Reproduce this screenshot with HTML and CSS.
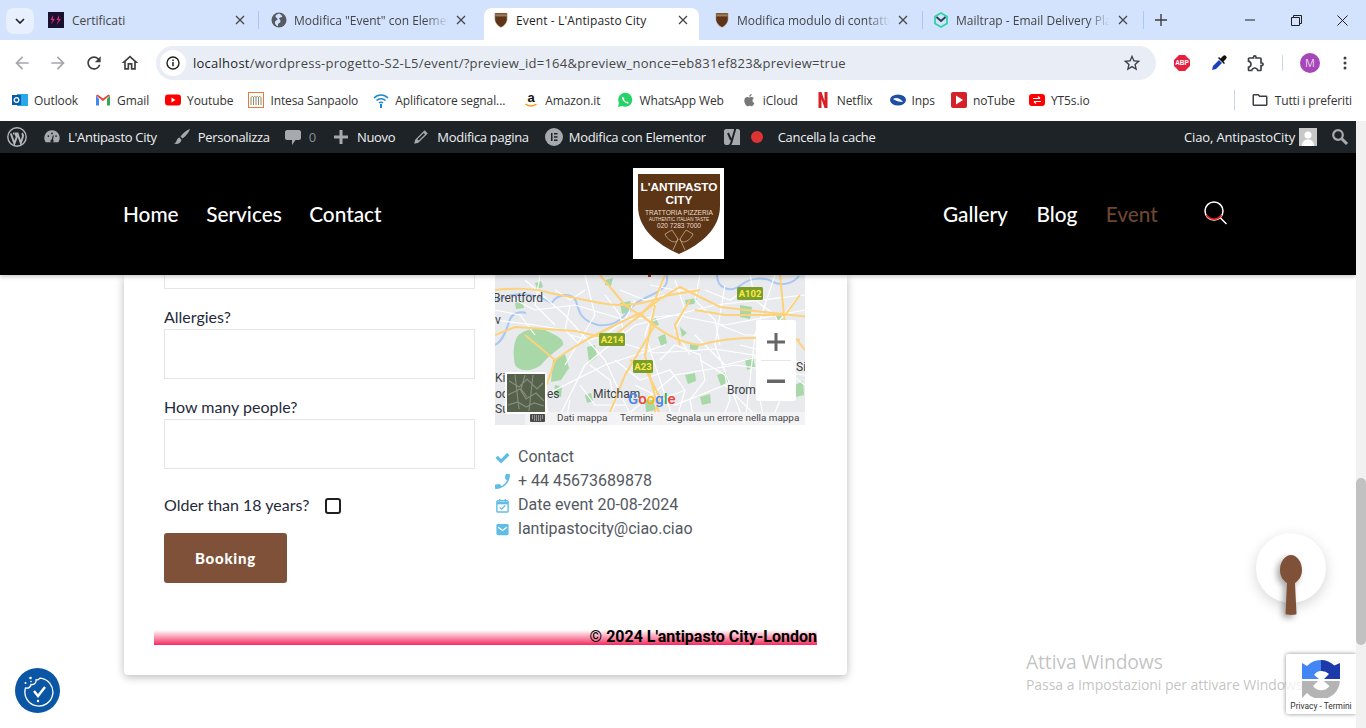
FILE: index.html
```html
<!DOCTYPE html>
<html lang="it">
<head>
<meta charset="utf-8">
<title>Event - L'Antipasto City</title>
<link rel="stylesheet" href="styles.css">
</head>
<body>
<svg class="defs" width="0" height="0" aria-hidden="true">
  <symbol id="shield" viewBox="0 0 16 18">
    <path d="M1 1h14v7c0 4-3 7.500-7 9.500C4 15.500 1 12 1 8z" fill="#5e3518" stroke="#e8e0d0" stroke-width=".6"/>
    <path d="M1.500 2.500h13v2.500h-13z" fill="#9c7d5e"/>
  </symbol>
  <symbol id="close" viewBox="0 0 10 10">
    <path d="M1 1l8 8M9 1l-8 8" stroke="#474747" stroke-width="1.300" fill="none"/>
  </symbol>
</svg>

<div class="progress"></div>

<header class="tabstrip">
  <div class="tabmenu"><svg width="10" height="6" viewBox="0 0 10 6"><path d="M1 1l4 4 4-4" stroke="#1f1f1f" stroke-width="1.600" fill="none"/></svg></div>
  <div class="tab tab-1">
    <svg class="fav" viewBox="0 0 16 16"><rect width="16" height="16" fill="#1a1030"/><path d="M5 3L2.500 8h2L3 12.500 7 7H5zM11 3L8.500 8h2L8.500 13 13 7h-2z" fill="#d6286f"/></svg>
    <span class="tab-title">Certificati</span>
    <svg class="tab-x"><use href="#close"/></svg>
  </div>
  <div class="tab tab-2">
    <svg class="fav" viewBox="0 0 16 16"><circle cx="8" cy="8" r="7.500" fill="#555a60"/><path d="M8 1.500c-1 1-3 1-3.500 2.500s1.500 1.500 2 3-2 1-2.500 3 2 4 2.500 4.500l1-3c1-.5 2-1 2-2.500S8 7.500 8 6.500s2-1 3-1.500S9.500 2 8 1.500z" fill="#d3e3fd"/></svg>
    <span class="tab-title fade">Modifica "Event" con Elementor</span>
    <svg class="tab-x"><use href="#close"/></svg>
  </div>
  <div class="tab tab-active">
    <svg class="fav" viewBox="0 0 16 18"><use href="#shield"/></svg>
    <span class="tab-title">Event - L'Antipasto City</span>
    <svg class="tab-x"><use href="#close"/></svg>
  </div>
  <div class="tab tab-4">
    <svg class="fav" viewBox="0 0 16 18"><use href="#shield"/></svg>
    <span class="tab-title fade">Modifica modulo di contatto</span>
    <svg class="tab-x"><use href="#close"/></svg>
  </div>
  <div class="tab tab-5">
    <svg class="fav" viewBox="0 0 16 16"><path d="M8 1l6 3.500v7L8 15l-6-3.500v-7z" fill="none" stroke="#2fd3a5" stroke-width="1.800"/><path d="M3.500 5L8 9l4.500-4" fill="none" stroke="#2d3a4a" stroke-width="1.800"/></svg>
    <span class="tab-title fade">Mailtrap - Email Delivery Platform</span>
    <svg class="tab-x"><use href="#close"/></svg>
  </div>
  <svg class="newtab" width="12" height="12" viewBox="0 0 12 12"><path d="M6 0v12M0 6h12" stroke="#3c3c3c" stroke-width="1.400"/></svg>
  <div class="winctl">
    <svg width="10" height="10" viewBox="0 0 10 10"><path d="M0 5h10" stroke="#1f1f1f" stroke-width="1"/></svg>
    <svg width="11" height="11" viewBox="0 0 11 11"><path d="M.5 2.500h8v8h-8zM2.500 2.500v-2h8v8h-2" fill="none" stroke="#1f1f1f"/></svg>
    <svg width="11" height="11" viewBox="0 0 11 11"><path d="M.5.500l10 10M10.500.500l-10 10" stroke="#1f1f1f"/></svg>
  </div>
</header>

<nav class="toolbar">
  <svg class="tb-ic" viewBox="0 0 24 24"><path fill="#a4a7ab" d="M20 11H7.830l5.590-5.590L12 4l-8 8 8 8 1.410-1.410L7.830 13H20z"/></svg>
  <svg class="tb-ic" viewBox="0 0 24 24"><path fill="#a4a7ab" d="M4 11h12.170l-5.590-5.590L12 4l8 8-8 8-1.410-1.410L16.170 13H4z"/></svg>
  <svg class="tb-ic" viewBox="0 0 24 24"><path fill="#3c3f43" d="M17.650 6.350A7.958 7.958 0 0 0 12 4c-4.420 0-7.990 3.580-7.990 8s3.570 8 7.990 8c3.730 0 6.840-2.550 7.730-6h-2.080A5.990 5.990 0 0 1 12 18c-3.310 0-6-2.690-6-6s2.690-6 6-6c1.660 0 3.140.690 4.220 1.780L13 11h7V4l-2.350 2.350z"/></svg>
  <svg class="tb-ic" viewBox="0 0 24 24"><path fill="#3c3f43" d="M12 5.690l5 4.500V18h-2v-6H9v6H7v-7.810l5-4.500M12 3L2 12h3v8h6v-6h2v6h6v-8h3L12 3z"/></svg>
  <div class="omnibox">
    <span class="site-info"><svg width="14" height="14" viewBox="0 0 14 14"><circle cx="7" cy="7" r="6" fill="none" stroke="#1f1f1f" stroke-width="1.400"/><path d="M7 6v4.200M7 3.600v1.300" stroke="#1f1f1f" stroke-width="1.500"/></svg></span>
    <span class="url"><span class="url-host">localhost</span>/wordpress-progetto-S2-L5/event/?preview_id=164&amp;preview_nonce=eb831ef823&amp;preview=true</span>
    <svg class="star" width="20" height="20" viewBox="0 0 24 24"><path fill="#3c3f43" d="M22 9.240l-7.190-.620L12 2 9.190 8.630 2 9.240l5.460 4.730L5.820 21 12 17.270 18.180 21l-1.630-7.030L22 9.240zM12 15.400l-3.760 2.270 1-4.280-3.320-2.880 4.380-.380L12 6.100l1.710 4.040 4.380.380-3.320 2.880 1 4.280L12 15.400z"/></svg>
  </div>
  <svg class="abp" width="16" height="16" viewBox="0 0 16 16"><path d="M5 0h6l5 5v6l-5 5H5l-5-5V5z" fill="#e8203f"/><text x="8" y="10.300" class="abp-t">ABP</text></svg>
  <svg class="picker" width="18" height="18" viewBox="0 0 18 18"><path d="M2 16l1-4 6-6 3 3-6 6z" fill="#1a3fbf"/><path d="M8 4l6 6 1-1-1.500-1.500L16 5a2 2 0 0 0-3-3l-2.500 2.500L9 3z" fill="#111"/></svg>
  <svg class="puzzle" width="20" height="20" viewBox="0 0 24 24"><path fill="#3c3f43" d="M10.500 4.500c.280 0 .5.220.5.500v2h6v6h2c.280 0 .5.220.5.500s-.220.500-.5.500h-2v6h-2.120c-.680-1.750-2.390-3-4.380-3s-3.700 1.250-4.380 3H4v-2.120c1.750-.680 3-2.390 3-4.380 0-1.990-1.240-3.700-2.990-4.380L4 7h6V5c0-.280.220-.5.500-.5m0-2A2.500 2.500 0 0 0 8 5H4c-1.100 0-1.990.9-1.990 2v3.800h.29c1.490 0 2.700 1.210 2.700 2.700s-1.210 2.700-2.700 2.700H2V20c0 1.100.9 2 2 2h3.800v-.3c0-1.490 1.210-2.700 2.700-2.700s2.700 1.210 2.700 2.700v.3H17c1.100 0 2-.9 2-2v-4c1.380 0 2.500-1.120 2.500-2.500S20.380 11 19 11V7c0-1.100-.9-2-2-2h-4a2.500 2.500 0 0 0-2.500-2.500z"/></svg>
  <span class="tb-sep"></span>
  <span class="avatar">M</span>
  <svg class="kebab" width="4" height="14" viewBox="0 0 4 14"><circle cx="2" cy="2" r="1.500" fill="#3c3f43"/><circle cx="2" cy="7" r="1.500" fill="#3c3f43"/><circle cx="2" cy="12" r="1.500" fill="#3c3f43"/></svg>
</nav>

<nav class="bookmarks">
  <span class="bm bm-outlook"><svg viewBox="0 0 16 16"><rect x="5" y="2" width="11" height="12" fill="#28a8ea"/><rect y="3" width="9" height="10" fill="#0a5cab"/><circle cx="4.500" cy="8" r="2.300" fill="none" stroke="#fff" stroke-width="1.300"/></svg>Outlook</span>
  <span class="bm bm-gmail"><svg viewBox="0 0 16 16"><path d="M1 3.500v10h3V7z" fill="#4285f4"/><path d="M15 3.500v10h-3V7z" fill="#34a853"/><path d="M1 3.500L8 9l7-5.500-1.500-1L8 6.500 2.500 2.500z" fill="#ea4335"/></svg>Gmail</span>
  <span class="bm bm-yt"><svg viewBox="0 0 16 16"><rect y="2.500" width="16" height="11" rx="3" fill="#f00"/><path d="M6.500 5.500v5l4-2.500z" fill="#fff"/></svg>Youtube</span>
  <span class="bm bm-intesa"><svg viewBox="0 0 16 16"><rect x=".5" y=".5" width="15" height="15" fill="#fff" stroke="#e07b39"/><path d="M3 13V6c0-2 2.500-2 2.500 0v7M5.500 6c0-2 2.500-2 2.500 0v7M8 6c0-2 2.500-2 2.500 0v7M10.500 6c0-2 2.500-2 2.500 0v7" fill="none" stroke="#8a8a6a"/></svg>Intesa Sanpaolo</span>
  <span class="bm bm-apl"><svg viewBox="0 0 16 16"><path d="M1 6c4-4 10-4 14 0M3.500 8.500c2.500-2.500 6.500-2.500 9 0M6 11c1-1 3-1 4 0" fill="none" stroke="#1e88d0" stroke-width="1.500"/><path d="M7 12h2v4H7z" fill="#1e88d0"/></svg>Aplificatore segnal...</span>
  <span class="bm bm-amz"><svg viewBox="0 0 16 16"><text x="8" y="10" class="amz-t">a</text><path d="M2.500 12c3 2.500 8 2.500 11 0" fill="none" stroke="#f90" stroke-width="1.500"/></svg>Amazon.it</span>
  <span class="bm bm-wa"><svg viewBox="0 0 16 16"><path d="M1 15l1-4a7 7 0 1 1 3 3z" fill="#25d366"/><path d="M5.500 4.500c-1 1-.5 3 1.500 5s4 2.500 5 1.500l-1.500-1.500-1 .5c-1-.5-2-1.500-2.500-2.500l.5-1z" fill="#fff"/></svg>WhatsApp Web</span>
  <span class="bm bm-icl"><svg viewBox="0 0 16 16"><path d="M11.500 8.500c0-1.500 1.200-2.200 1.300-2.300-.7-1-1.800-1.200-2.200-1.200-.9-.1-1.800.6-2.300.6s-1.200-.6-2-.6c-1 0-2 .6-2.500 1.500-1.100 1.900-.3 4.700.8 6.200.5.800 1.100 1.600 2 1.600.8 0 1.100-.5 2-.5s1.200.5 2 .5 1.400-.8 1.900-1.500c.6-.9.800-1.700.8-1.800 0 0-1.800-.7-1.800-2.500zM10 4c.4-.5.700-1.200.6-2-.6 0-1.400.4-1.800.9-.4.5-.7 1.200-.6 1.900.7 0 1.400-.4 1.800-.8z" fill="#777"/></svg>iCloud</span>
  <span class="bm bm-nf"><svg viewBox="0 0 16 16"><path d="M3.500 0h3l3 9V0h3v16h-3l-3-9v9h-3z" fill="#d81f26"/></svg>Netflix</span>
  <span class="bm bm-inps"><svg viewBox="0 0 16 16"><ellipse cx="8" cy="8" rx="8" ry="5.500" fill="#1d4fa3"/><path d="M3 7c3-2 7-1 10 3-4 0-7-1-10-3z" fill="#fff"/></svg>Inps</span>
  <span class="bm bm-nt"><svg viewBox="0 0 16 16"><rect width="16" height="16" rx="2" fill="#d2232a"/><path d="M5 3.500v9l7-4.500z" fill="#fff"/></svg>noTube</span>
  <span class="bm bm-yt5"><svg viewBox="0 0 16 16"><rect y="2" width="16" height="12" rx="3" fill="#f00"/><path d="M4 6.500h7M9 4.500l2 2M12 9.500H5M7 11.500l-2-2" stroke="#fff" stroke-width="1.200" fill="none"/></svg>YT5s.io</span>
  <span class="bm-sep"></span>
  <span class="bm bm-all"><svg viewBox="0 0 24 24"><path fill="#3c3f43" d="M20 6h-8l-2-2H4c-1.100 0-2 .9-2 2v12c0 1.100.9 2 2 2h16c1.100 0 2-.9 2-2V8c0-1.100-.9-2-2-2zm0 12H4V6h5.170l2 2H20v10z"/></svg>Tutti i preferiti</span>
</nav>

<div class="viewport">
  <div class="site">
    <div class="adminbar">
      <span class="ab ab-wp"><svg width="20" height="20" viewBox="0 0 20 20"><circle cx="10" cy="10" r="9.200" fill="none" stroke="#b4b7ba" stroke-width="1.400"/><path d="M3.800 6.500l3.600 10 2.300-6.500-1.300-3.500M7.500 6.500h-1.500M8 6.500h3.500M10.500 6.500l3.300 9.500 2-6c.5-1.600 0-2.800-.8-3.800" fill="none" stroke="#b4b7ba" stroke-width="2"/></svg></span>
      <span class="ab ab-site"><svg width="18" height="18" viewBox="0 0 20 20"><path d="M10 2.500a8.500 8.500 0 0 0-7 13.300h14A8.500 8.500 0 0 0 10 2.500z" fill="#a7aaad"/><path d="M9 15l2-7 1 .3-1.200 6.700" fill="#1d2327"/><circle cx="10" cy="14.500" r="1.800" fill="#1d2327"/><circle cx="6" cy="9" r="1" fill="#1d2327"/><circle cx="10" cy="6" r="1" fill="#1d2327"/><circle cx="14.500" cy="9" r="1" fill="#1d2327"/></svg>L'Antipasto City</span>
      <span class="ab ab-cust"><svg width="20" height="20" viewBox="0 0 20 20"><path d="M18 2c-3 1-7 4-9.500 7.500l2 2C14 9 17 5 18 2zM7.500 10.500c-2 .5-2.500 2-3 3.500-.3 1-1.200 2-2.500 2.500 3 1 6.500.2 7.500-3.500z" fill="#a7aaad"/></svg>Personalizza</span>
      <span class="ab ab-com"><svg width="20" height="20" viewBox="0 0 20 20"><path d="M4 3h12c1 0 2 1 2 2v6c0 1-1 2-2 2h-3.500L9 18v-5H4c-1 0-2-1-2-2V5c0-1 1-2 2-2z" fill="#a7aaad"/></svg><span class="ab-dim">0</span></span>
      <span class="ab ab-new"><svg width="16" height="16" viewBox="0 0 16 16"><path d="M6.500 1h3v5.500H15v3H9.500V15h-3V9.500H1v-3h5.500z" fill="#a7aaad"/></svg>Nuovo</span>
      <span class="ab ab-edit"><svg width="18" height="18" viewBox="0 0 20 20"><path d="M14 2.500l3.500 3.500L7 16.500l-4.500 1 1-4.500zM13 5.500L6 12.500l1.500 1.500 7-7z" fill="#a7aaad" fill-rule="evenodd"/></svg>Modifica pagina</span>
      <span class="ab ab-el"><svg width="18" height="18" viewBox="0 0 18 18"><circle cx="9" cy="9" r="9" fill="#a7aaad"/><path d="M6 5h1.500v8H6zM9 5h3.500v1.500H9zM9 8.250h3.500v1.500H9zM9 11.500h3.500V13H9z" fill="#1d2327"/></svg>Modifica con Elementor</span>
      <span class="ab ab-yoast"><svg width="18" height="20" viewBox="0 0 18 20"><path d="M3 2h12c1 0 2 1 2 2v14H3c-1 0-2-1-2-2V4c0-1 1-2 2-2z" fill="#a7aaad"/><path d="M12.500 1l-4 14c-.5 2-1.500 3.500-3 4M5 6l3 7" fill="none" stroke="#1d2327" stroke-width="2"/></svg></span>
      <span class="ab-dot"></span>
      <span class="ab ab-cache">Cancella la cache</span>
      <span class="ab ab-hello">Ciao, AntipastoCity<svg class="ab-avatar" width="18" height="18" viewBox="0 0 18 18"><rect width="18" height="18" fill="#c8c8c8"/><circle cx="9" cy="7" r="3.500" fill="#fff"/><path d="M3 18c0-5 3-6.500 6-6.500s6 1.500 6 6.500z" fill="#fff"/></svg></span>
      <svg class="ab-search" width="18" height="18" viewBox="0 0 18 18"><circle cx="7" cy="7" r="4.800" fill="none" stroke="#a7aaad" stroke-width="2.200"/><path d="M10.500 10.500l5.500 5.500" stroke="#a7aaad" stroke-width="3"/></svg>
    </div>

    <div class="masthead">
      <ul class="menu menu-l">
        <li>Home</li><li>Services</li><li>Contact</li>
      </ul>
      <div class="logo">
        <svg width="82" height="80" viewBox="0 0 82 80">
          <path d="M0 0h82v32c0 22-18 38-41 48C18 70 0 54 0 32z" fill="#5c3416"/>
          <text x="41" y="17" class="lg-a">L'ANTIPASTO</text>
          <text x="41" y="30" class="lg-a">CITY</text>
          <text x="41" y="41" class="lg-b">TRATTORIA PIZZERIA</text>
          <text x="41" y="47" class="lg-c">AUTHENTIC ITALIAN TASTE</text>
          <text x="41" y="54" class="lg-b">020 7283 7000</text>
          <path d="M27 60l7-4 6 9c-1 4-5 3-7 2-3-2-5-4-6-7zM55 60l-7-4-6 9c1 4 5 3 7 2 3-2 5-4 6-7zM40 65l-5 11M42 65l5 11" fill="none" stroke="#c9ad8c" stroke-width=".8"/>
        </svg>
      </div>
      <div class="menu-r">
        <ul class="menu menu-right">
          <li>Gallery</li><li>Blog</li><li class="current">Event</li>
        </ul>
        <svg class="m-search" width="25" height="25" viewBox="0 0 25 25"><circle cx="11" cy="11" r="9" fill="none" stroke="#fff" stroke-width="1.500"/><path d="M3.500 15a9 9 0 0 0 15 0" fill="none" stroke="#e2231a" stroke-width="1.800"/><path d="M17.500 18l6 6" stroke="#fff" stroke-width="1.500"/></svg>
      </div>
    </div>

    <main class="content">
      <article class="card">
        <div class="columns">
          <form class="form">
            <div class="input input-cut"></div>
            <label class="label label-1">Allergies?</label>
            <div class="input"></div>
            <label class="label label-2">How many people?</label>
            <div class="input"></div>
            <div class="adult">Older than 18 years?<span class="check"></span></div>
            <div class="booking">Booking</div>
          </form>
          <div class="side">
            <svg class="map" width="310" height="150" viewBox="0 0 310 150">
              <rect width="310" height="150" fill="#e8eaed"/>
              <g fill="#a8d8a8">
                <path d="M22 62c6-8 20-10 30-6 8 4 18 8 16 14-6 6-14 10-22 20-8 6-20 8-26 0-2-10-2-20 2-28z"/>
                <path d="M58 85l12-6 4 14-8 12-10 2z"/>
                <path d="M125 28l10-2 2 10-10 3zM92 72l8-2 2 12-8 6zM163 62l7-3 2 9-6 3zM185 52l7 6-5 4zM195 68l9 2-2 6-7-2zM222 100l9-3 3 9-8 5zM190 100l10-2 1 8-8 3zM245 30l12 2-2 12-10-2zM280 40l6-2 2 8-6 2zM300 110l8-4 1 14-8 2zM90 120l6-2 2 8-6 2zM150 125l8 0 3 10-10 2zM40 8l6-2 2 6-6 2zM190 25l12-2-3 6-8 1zM20 28l8-2 1 7-8 1zM155 45l6-2 3 7-7 1zM250 85l8-3 2 10-8 3zM110 5l8-2-2 8-6-1zM60 110l7 2-1 10-7-2zM205 122l10-3 1 9-9 2z"/>
              </g>
              <g fill="none" stroke="#a9c8f4" stroke-width="2">
                <path d="M2 25c20-10 40-5 55 3 4-8 18-12 24-2 3 12 6 20 22 24 18 2 26-8 34-18 8-10 22-10 32-20 4-4 3-8 3-14"/>
                <path d="M222 0c0 14 14 18 24 10 10-8 24-8 32-3 8 4 20 2 26-6"/>
                <path d="M0 70c8-4 12-16 15-26 3-6 10-8 16-6"/>
              </g>
              <g fill="none" stroke="#fff" stroke-width="1.200">
                <path d="M0 45l40 5 60 10 60 18 60-4 90 14M30 5l40 35 40 45 30 65M170 0l-20 60 30 90M230 10l-10 60 30 80M60 150l30-60 50-40 80-20 90-10M120 150l60-50 60-10 70 10M0 100l50 20 60-30 60-20M280 0l-20 60-10 90M90 0l10 40-30 50M200 60l30 30 40-10 40 30M140 110l40 20 50-20 30 30M10 20l30 15 40-5 50 15 50-5 50 10 80-15"/>
                <path d="M0 35l25 5 15 20M45 0l-5 30 20 20M75 30l-5 25 15 15M110 20l15 20 5 25M140 25l-10 20-20 15M180 5l10 30-10 20 15 25M205 0l-5 25 20 20 5 25M255 0l5 25 20 15 10 25M300 25l-15 20 5 30M95 90l20 15 5 25-10 20M120 85l25 20 30-10 15 20-10 35M165 85l15-15 25 10 5 25-15 20 5 25M205 85l25 15 5 25-10 25M245 70l20 5M190 115l-25 10M75 60l20 5 15-5M85 110l15 20 30 0M35 110l15 10 5 30M75 125l-5 25M265 125l5 25M285 125l-10 25M300 75l-25 50M225 50l25 10 30 0M125 15l25 10 20-5M155 10l25 5 25 0M210 15l25 10 15-10M60 15l15 10 15-10"/>
              </g>
              <g fill="none" stroke="#fdd27a" stroke-width="2">
                <path d="M0 60l20-8 60 4 35 8 50-40 20-12 40 20 90 10"/>
                <path d="M0 15c15-2 40-2 55 3l50 10c30 6 50-2 70-8l30-5"/>
                <path d="M105 0l25 30 30 20-30 50-20 50"/>
                <path d="M60 85c20-15 40-25 60-35l25-12c20 20 40 30 60 32 20-6 50-10 100-5"/>
                <path d="M160 30l-10 50 12 50 5 20"/>
                <path d="M135 85l15 8 15 30-10 27"/>
                <path d="M200 35l30 5 60 0 15-20M285 0l5 50 20 25"/>
                <path d="M30 60l30 25-10 30-15 25"/>
                <path d="M170 0l-10 25 -20 20M195 25l-15 25 5 20"/>
              </g>
              <g class="map-label">
                <text x="-2" y="27">Brentford</text>
                <text x="0" y="49">v</text>
                <text x="0" y="107">Ki</text>
                <text x="0" y="123">oo</text>
                <text x="52" y="123">es</text>
                <text x="0" y="138">Su</text>
                <text x="98" y="123">Mitcham</text>
                <text x="232" y="119">Brom</text>
                <text x="301" y="96">Sic</text>
              </g>
              <g>
                <rect x="242" y="12" width="26" height="13" rx="1.500" fill="#7a9e2a"/>
                <text x="255" y="22" class="road-t">A102</text>
                <rect x="104" y="58" width="26" height="13" rx="1.500" fill="#7a9e2a"/>
                <text x="117" y="68" class="road-t">A214</text>
                <rect x="138" y="85" width="20" height="13" rx="1.500" fill="#7a9e2a"/>
                <text x="148" y="95" class="road-t">A23</text>
              </g>
              <path d="M153 0h3v2h-3z" fill="#c5221f"/>
              <text class="google" x="133" y="129"><tspan fill="#4285f4">G</tspan><tspan fill="#ea4335">o</tspan><tspan fill="#fbbc05">o</tspan><tspan fill="#4285f4">g</tspan><tspan fill="#34a853">l</tspan><tspan fill="#ea4335">e</tspan></text>
              <rect x="30" y="137" width="280" height="13" fill="#f4f5f6" fill-opacity=".85"/>
              <g fill="#4a4a4a"><rect x="35" y="139" width="15" height="8" rx="1"/></g>
              <path d="M37 141h11M37 143h11M39 145h7" stroke="#fff" stroke-width=".8" stroke-dasharray="1 1"/>
              <g class="attr">
                <text x="62" y="146">Dati mappa</text>
                <text x="125" y="146">Termini</text>
                <text x="171" y="146">Segnala un errore nella mappa</text>
              </g>
              <rect x="10" y="97" width="42" height="42" rx="2" fill="#fff"/>
              <rect x="12" y="99" width="38" height="38" fill="#56614c"/>
              <path d="M14 106l10 6 8-8 10 10 6-6M13 120l12-6 6 10 10-6 8 8M20 100l4 34M38 100l-4 36M13 130l10-3 8 5 8-4 10 3M30 100l-4 14 6 8" fill="none" stroke="#868d7a" stroke-width="1.200"/>
              <rect x="261" y="45" width="40" height="81" rx="2" fill="#fff"/>
              <path d="M266 85.500h30" stroke="#e6e6e6"/>
              <path d="M279.500 58h3v7.500h7.500v3h-7.500v7.500h-3v-7.500H272v-3h7.500z" fill="#666"/>
              <path d="M272 104.500h18v3.500h-18z" fill="#666"/>
            </svg>
            <ul class="facts">
              <li><svg viewBox="0 0 16 16"><path d="M.5 8.500l2.500-2.500 3.500 3.500L13 3l2.500 2.500-9 9z" fill="#61bde3"/></svg>Contact</li>
              <li><svg viewBox="3 3 18 18"><g transform="matrix(-1 0 0 1 24 0)"><path fill="#61bde3" d="M6.620 10.790c1.440 2.830 3.760 5.140 6.590 6.590l2.200-2.200c.27-.27.67-.36 1.020-.24 1.120.37 2.330.57 3.570.57.55 0 1 .45 1 1V20c0 .55-.45 1-1 1-9.390 0-17-7.610-17-17 0-.55.45-1 1-1h3.500c.55 0 1 .45 1 1 0 1.250.2 2.450.57 3.570.11.35.03.74-.25 1.020l-2.200 2.200z"/></g></svg>+ 44 45673689878</li>
              <li><svg viewBox="0 0 16 16"><rect x="2" y="3" width="12" height="12" rx="1" fill="none" stroke="#61bde3" stroke-width="1.500"/><path d="M2 5.500h12" stroke="#61bde3" stroke-width="2.500"/><path d="M5 1v3M11 1v3" stroke="#61bde3" stroke-width="1.500"/><path d="M5 10l2 2 4-4" fill="none" stroke="#61bde3" stroke-width="1.300"/></svg>Date event 20-08-2024</li>
              <li><svg viewBox="0 0 16 16"><rect x="1.500" y="2" width="13" height="12" rx="1.500" fill="#61bde3"/><path d="M3.500 5.500L8 9l4.500-3.500" fill="none" stroke="#fff" stroke-width="1.300"/></svg>lantipastocity@ciao.ciao</li>
            </ul>
          </div>
        </div>
        <footer class="copy">© 2024 L'antipasto City-London</footer>
      </article>
    </main>

    <div class="watermark">
      <div class="wm-a">Attiva Windows</div>
      <div class="wm-b">Passa a Impostazioni per attivare Windows.</div>
    </div>
    <div class="recaptcha">
      <svg width="38" height="38" viewBox="0 0 38 38">
        <path d="M38 21a19 19 0 0 1-33 12L0 38V21h16l-5 5a10 10 0 0 0 16.500 0l-6-5z" fill="#b4b4b4"/>
        <path d="M19 0v11a8 8 0 0 0-6.800 4L17 19H0V3l5 3A19 19 0 0 1 19 0z" fill="#4285f4"/>
        <path d="M19 0a19 19 0 0 1 13.400 5.600L38 3v16H22l5-5a11 11 0 0 0-8-3z" fill="#1c3aa9"/>
      </svg>
      <div class="rc-links">Privacy - Termini</div>
    </div>
    <div class="spoon-btn"></div>
    <svg class="spoon" width="24" height="62" viewBox="0 0 24 62"><path d="M12 1c6 0 11 7 11 15 0 7-4 11-7 13l1.500 31c-2 1.200-9 1.200-11 0L8 29C5 27 1 23 1 16 1 8 6 1 12 1z" fill="#7f5138"/></svg>
    <div class="cookie">
      <svg width="32" height="32" viewBox="0 0 32 32"><path d="M18 3.100A14 14 0 1 1 3.500 13c3 .5 5-1 5.500-3.500 3 .5 5.500-1.500 5-4.500 1.500 0 3-.5 4-1.900z" fill="none" stroke="#fff" stroke-width="1.300"/><path d="M12 16l4 5 7-9" fill="none" stroke="#fff" stroke-width="2.400"/><circle cx="16" cy="26" r="1.200" fill="#fff"/><circle cx="8.500" cy="3" r="1.300" fill="#fff"/><circle cx="3.500" cy="8" r="1" fill="#fff"/><circle cx="9" cy="6.500" r=".8" fill="#fff"/></svg>
    </div>
  </div>
  <div class="scrollbar"><div class="thumb"></div></div>
</div>
</body>
</html>
```

FILE: styles.css
```css
* { box-sizing: border-box; }
html, body { margin: 0; height: 100%; }
body {
  width: 1366px;
  height: 728px;
  overflow: hidden;
  display: flex;
  flex-direction: column;
  font-family: "Open Sans", sans-serif;
  background: #fff;
  position: relative;
}
ul { list-style: none; margin: 0; padding: 0; }
.defs { position: absolute; }

.progress {
  position: absolute;
  left: 565px; top: 0;
  width: 240px; height: 1px;
  background: linear-gradient(90deg, #c9ccd1 0 95px, #1a73e8 95px 142px, #c9ccd1 142px);
}

/* tab strip */
.tabstrip {
  height: 40px;
  background: #d3e3fd;
  display: flex;
  align-items: flex-end;
  position: relative;
}
.tabmenu {
  width: 28px; height: 26px;
  margin: 0 2px 6px 6px;
  background: #e8f0fd;
  border-radius: 8px;
  display: flex; align-items: center; justify-content: center;
}
.tab {
  height: 18px;
  margin-bottom: 11px;
  display: flex;
  align-items: center;
  font-size: 12px;
  color: #444;
  position: relative;
}
.fav { width: 16px; height: 16px; flex: none; margin-right: 7px; }
.tab-1 .fav { margin-right: 8px; }
.tab-title { flex: 1; white-space: nowrap; overflow: hidden; }
.tab-title.fade { -webkit-mask-image: linear-gradient(90deg, #000 85%, transparent); mask-image: linear-gradient(90deg, #000 85%, transparent); }
.tab-x { width: 10px; height: 10px; flex: none; }
.tab-1 { width: 222px; padding: 0 13px 0 12px; }
.tab-2 { width: 226px; padding: 0 18px 0 12px; border-left: 1px solid #a8c7fa; }
.tab-2 .tab-x { margin-left: 8px; }
.tab-active {
  width: 215px; height: 32px;
  margin-bottom: 0;
  padding: 0 11px 8px 9px;
  background: #fff;
  border-radius: 8px 8px 0 0;
  color: #1f1f1f;
  letter-spacing: .12px;
}
.tab-4 { width: 224px; padding: 0 14px 0 15px; border-right: 1px solid #a8c7fa; }
.tab-4 .tab-x, .tab-5 .tab-x { margin-left: 8px; }
.tab-5 { width: 221px; padding: 0 15px 0 10px; border-right: 1px solid #a8c7fa; }
.newtab { margin: 0 0 14px 11px; }
.winctl {
  margin-left: auto;
  width: 121px;
  padding-right: 18px;
  display: flex; justify-content: space-between; align-items: center;
  height: 40px;
  align-self: flex-start;
}

/* toolbar */
.toolbar {
  height: 46px;
  padding: 6px 0 6px 12px;
  background: #fff;
  display: flex;
  align-items: center;
}
.tb-ic { width: 20px; height: 20px; margin-right: 16px; flex: none; }
.omnibox {
  width: 1000px;
  height: 34px;
  background: #e9eef6;
  border-radius: 17px;
  display: flex;
  align-items: center;
  padding: 0 14px 0 4px;
}
.site-info {
  width: 26px; height: 26px; border-radius: 50%;
  background: #fff;
  display: flex; align-items: center; justify-content: center;
  margin-right: 7px;
}
.url { font-size: 13px; color: #474747; letter-spacing: .25px; flex: 1; white-space: nowrap; }
.url-host { color: #1f1f1f; }
.abp-t { font: bold 6.500px "Liberation Sans", sans-serif; fill: #fff; text-anchor: middle; }
.abp { margin-left: 18px; }
.picker { margin-left: 20px; }
.puzzle { margin-left: 18px; }
.tb-sep { width: 1px; height: 16px; background: #c7d7f0; margin-left: 16px; }
.avatar {
  width: 20px; height: 20px; border-radius: 50%;
  background: #a646b8; color: #e8d4ec;
  font-size: 11px; text-align: center; line-height: 20px;
  margin-left: 17px;
}
.kebab { margin-left: 23px; }

/* bookmarks */
.bookmarks {
  height: 35px;
  background: #fff;
  display: flex;
  align-items: center;
  padding: 0 0 7px 12px;
  font-size: 12px;
  color: #333;
  letter-spacing: -.1px;
}
.bm { display: flex; align-items: center; white-space: nowrap; }
.bm svg { width: 16px; height: 16px; margin-right: 6px; flex: none; }
.bm-gmail { margin-left: 17px; }
.bm-yt { margin-left: 16px; }
.bm-intesa { margin-left: 15px; }
.bm-apl { margin-left: 15px; }
.bm-amz { margin-left: 18px; }
.bm-wa { margin-left: 17px; }
.bm-icl { margin-left: 17px; }
.bm-nf { margin-left: 17px; }
.bm-inps { margin-left: 17px; }
.bm-nt { margin-left: 16px; }
.bm-yt5 { margin-left: 14px; }
.bm-sep { width: 1px; height: 20px; background: #c7d7f0; margin-left: auto; }
.bm-all { margin: 0 14px 0 16px; letter-spacing: -.15px; }
.bm-all svg { width: 18px; height: 18px; }
.amz-t { font: bold 13px "Liberation Sans", sans-serif; text-anchor: middle; fill: #111; }

/* page */
.viewport {
  flex: 1;
  display: flex;
  min-height: 0;
}
.site {
  width: 1356px;
  display: flex;
  flex-direction: column;
  position: relative;
  overflow: hidden;
}
.scrollbar {
  width: 10px;
  background: #f1f1f1;
  padding-top: 357px;
}
.thumb { height: 167px; background: #c1c1c1; border-radius: 5px; }

.adminbar {
  height: 32px;
  background: #1d2327;
  flex: none;
  display: flex;
  align-items: center;
  font-size: 13px;
  color: #f0f0f1;
  padding-left: 7px;
  letter-spacing: -.3px;
}
.ab { display: flex; align-items: center; white-space: nowrap; }
.ab svg { flex: none; }
.ab-site { margin-left: 16px; }
.ab-site svg { margin-right: 7px; }
.ab-cust { margin-left: 15px; }
.ab-cust svg { margin-right: 6px; }
.ab-com { margin-left: 13px; }
.ab-com svg { margin-right: 6px; }
.ab-dim { color: #8c8f94; }
.ab-new { margin-left: 17px; }
.ab-new svg { margin-right: 8px; }
.ab-edit { margin-left: 17px; }
.ab-edit svg { margin-right: 7px; }
.ab-el { margin-left: 16px; }
.ab-el svg { margin-right: 6px; }
.ab-yoast { margin-left: 17px; }
.ab-dot { width: 12px; height: 12px; border-radius: 50%; background: #dd3333; margin-left: 10px; }
.ab-cache { margin-left: 15px; }
.ab-hello { margin-left: auto; letter-spacing: -.15px; }
.ab-avatar { margin-left: 4px; }
.ab-search { margin: 0 7px 0 14px; }

.masthead {
  height: 122px;
  flex: none;
  background: #000;
  display: grid;
  grid-template-columns: 633px 91px 1fr;
  align-items: center;
  position: relative;
  z-index: 2;
  box-shadow: 0 2px 4px rgba(0,0,0,.2);
}
.menu {
  display: flex;
  font: 500 20.800px "Lato", sans-serif;
  color: #fff;
  padding-bottom: 2px;
}
.menu-l { gap: 27.500px; padding-left: 123px; }
.menu-right { gap: 28.500px; }
.current { color: #6d4631; }
.logo {
  width: 91px; height: 91px;
  margin-top: -1px;
  background: #fff;
  display: flex; align-items: center; justify-content: center;
}
.lg-a { font: bold 11.800px "Liberation Sans", sans-serif; fill: #fff; text-anchor: middle; }
.lg-b { font: 6.600px "Liberation Sans", sans-serif; fill: #eadfce; text-anchor: middle; }
.lg-c { font: 4.600px "Liberation Sans", sans-serif; fill: #eadfce; text-anchor: middle; }
.menu-r { display: flex; align-items: center; padding-left: 219px; }
.m-search { margin: -3px 0 0 45px; }

.content { flex: 1; min-height: 0; }
.card {
  width: 723px;
  margin-left: 124px;
  background: #fff;
  border-radius: 0 0 4px 4px;
  box-shadow: 0 2px 8px rgba(0,0,0,.28);
  padding-bottom: 30px;
}
.columns {
  display: grid;
  grid-template-columns: 311px 310px;
  column-gap: 20px;
  padding-left: 40px;
}
.form { display: flex; flex-direction: column; align-items: flex-start; font: 16px/24px "Lato", sans-serif; color: #1f2a3a; }
.input { width: 311px; height: 50px; border: 1px solid #e5e5e5; background: #fff; }
.input-cut { height: 14px; border-top: 0; }
.label { display: block; }
.label-1, .label-2 { margin-top: 16px; }
.adult { margin-top: 24px; display: flex; align-items: center; }
.check {
  width: 16px; height: 16px;
  margin: 2px 0 0 16px;
  border: 2px solid #1f1f1f;
  border-radius: 3px;
  background: #fff;
}
.booking {
  width: 123px; height: 50px;
  margin-top: 16px;
  background: #7f5138;
  border-radius: 3px;
  color: #fff;
  font: 900 15px/50px "Lato", sans-serif;
  letter-spacing: .75px;
  text-align: center;
}
.map { display: block; }
.map-label { font: 12px "Roboto", sans-serif; fill: #3c4043; }
.road-t { font: bold 9.500px "Roboto", sans-serif; fill: #fde84a; text-anchor: middle; }
.google { font: 500 15px "Roboto", sans-serif; }
.attr { font: 9.900px "Roboto", sans-serif; fill: #444; }
.facts { margin-top: 20px; font: 16px/24px "Roboto", sans-serif; color: #54595f; }
.facts li { display: flex; align-items: center; }
.facts svg { width: 15px; height: 15px; margin-right: 8px; flex: none; }
.copy {
  margin: 47px 30px 0;
  height: 15px;
  background: linear-gradient(180deg, #fff 0%, #f42a5e 100%);
  font: bold 16px/13px "Roboto", sans-serif;
  color: #000;
  text-align: right;
}

/* floating widgets */
.watermark {
  position: absolute;
  left: 1026px; top: 528px;
  color: rgba(120,120,120,.45);
  font-family: "Open Sans", sans-serif;
  white-space: nowrap;
}
.wm-a { font-size: 19.300px; line-height: 26px; letter-spacing: -.1px; }
.wm-b { font-size: 14px; line-height: 20px; letter-spacing: -.05px; }
.recaptcha {
  position: absolute;
  left: 1286px; top: 533px;
  width: 70px; height: 60px;
  background: rgba(255,255,255,.75);
  box-shadow: 0 0 4px rgba(0,0,0,.45);
  border-radius: 2px 0 0 2px;
  padding: 6px 0 0 16px;
}
.rc-links {
  position: absolute;
  left: 0; right: 0; bottom: 1px;
  font: 8.400px/14px "Roboto", sans-serif;
  color: #333;
  text-align: center;
  white-space: nowrap;
}
.spoon-btn {
  position: absolute;
  left: 1256px; top: 412px;
  width: 70px; height: 70px;
  border-radius: 50%;
  background: #fff;
  box-shadow: 0 4px 14px rgba(0,0,0,.16);
}
.spoon {
  position: absolute;
  left: 1279px; top: 433px;
  filter: drop-shadow(-3px 3px 3px rgba(0,0,0,.35));
}
.cookie {
  position: absolute;
  left: 15px; top: 547px;
  width: 45px; height: 45px;
  border-radius: 50%;
  background: #0a56a5;
  display: flex; align-items: center; justify-content: center;
}
```
